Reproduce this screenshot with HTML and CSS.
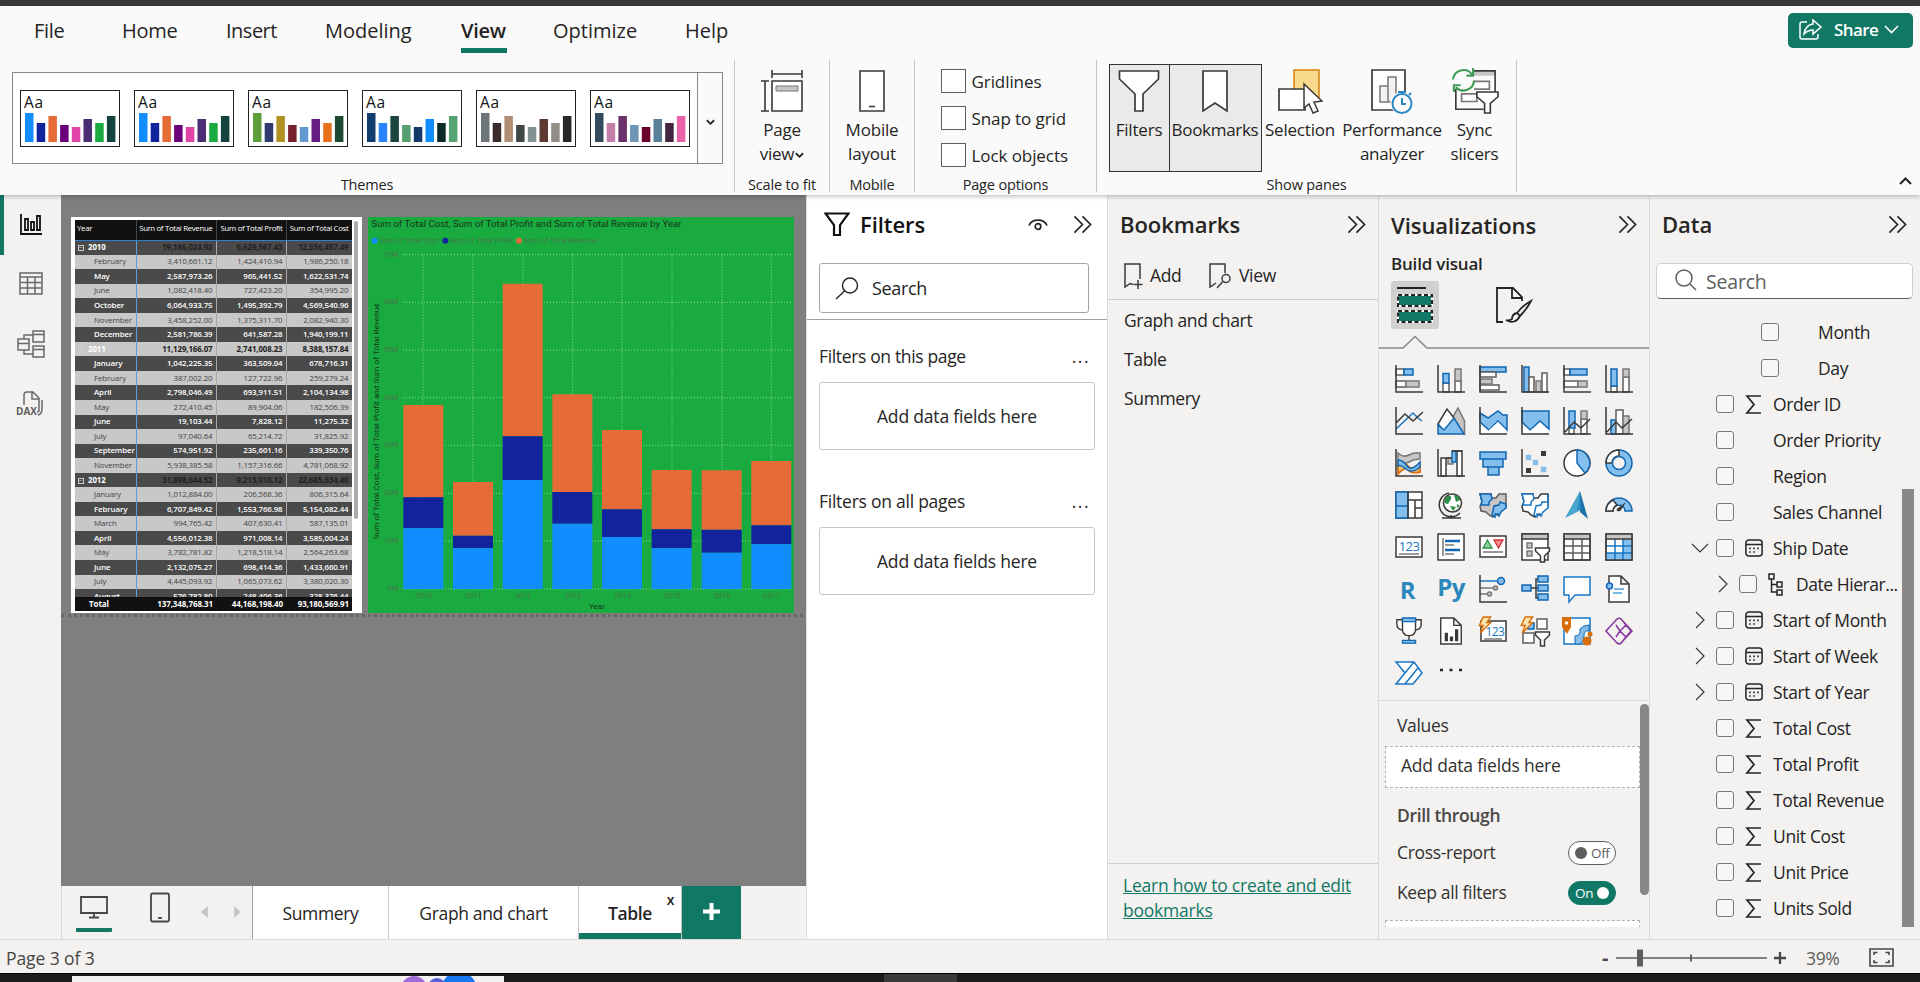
FILE: index.html
```html
<!DOCTYPE html>
<html lang="en">
<head>
<meta charset="utf-8">
<title>Report - View</title>
<link rel="stylesheet" href="styles.css">
</head>
<body>
<svg class="defs" width="0" height="0">
  <symbol id="expand" viewBox="0 0 20 20"><path d="M1.500 1.500 10 10 1.500 18.500M10 1.500 18.500 10 10 18.500" fill="none" stroke="#252423" stroke-width="1.700"/></symbol>
  <symbol id="sigma" viewBox="0 0 17 19"><path d="M16 1H2l7 8.500-7 8.500h14" fill="none" stroke="#252423" stroke-width="1.700"/></symbol>
  <symbol id="calendar" viewBox="0 0 18 18"><rect x=".9" y=".9" width="16.200" height="16.200" rx="3" fill="none" stroke="#252423" stroke-width="1.500"/><path d="M1 5.500h16" stroke="#252423" stroke-width="1.500"/><path d="M8.200 9.300h1.600M12.200 9.300h1.600M4.200 9.300h1.600M4.200 13h1.600M8.200 13h1.600" stroke="#252423" stroke-width="1.700"/></symbol>
  <symbol id="right" viewBox="0 0 10 18"><path d="M1 1l8 8-8 8" fill="none" stroke="#3b3a39" stroke-width="1.200"/></symbol>
  <symbol id="down" viewBox="0 0 18 10"><path d="M1 1l8 8 8-8" fill="none" stroke="#3b3a39" stroke-width="1.200"/></symbol>
  <symbol id="caret" viewBox="0 0 10 7"><path d="M1 1l4 4 4-4" fill="none" stroke="#252423" stroke-width="2"/></symbol>
  <symbol id="bolt" viewBox="0 0 14 19"><path d="M5 1h8l-4 6h4L2 18l3-8H1z" fill="#fbe3b0" stroke="#d86f0a" stroke-width="1.500"/></symbol>
</svg>

<div class="titlebar"></div>
<header class="ribbon">
  <nav class="tabs">
    <span class="tab file">File</span><span class="tab home">Home</span><span class="tab insert">Insert</span><span class="tab modeling">Modeling</span><span class="tab view active">View</span><span class="tab optimize">Optimize</span><span class="tab help">Help</span>
    <button class="share"><svg width="25" height="24" viewBox="0 0 25 24" fill="none" stroke="#fff" stroke-width="1.500"><path d="M9 4H4a2 2 0 0 0-2 2v13a2 2 0 0 0 2 2h14a2 2 0 0 0 2-2v-3"/><path d="M15 2l8 7-8 7v-4c-4 0-6 1-9 4 1-6 4-9.500 9-10z"/></svg><span>Share</span><svg width="15" height="9" viewBox="0 0 15 9"><path d="M1 1l6.500 6.500L14 1" fill="none" stroke="#fff" stroke-width="1.600"/></svg></button>
  </nav>
  <div class="groups">
    <section class="group g-themes">
      <div class="gallery">
        <div class="thumbs">
          <div class="thumb"><b>Aa</b><svg viewBox="0 0 92 30" width="92" height="30"><path fill="#118dff" d="M1 1h8.500v29H1z"/><path fill="#12239e" d="M12.700 11h8.500v19h-8.500z"/><path fill="#e66c37" d="M24.400 4h8.500v26h-8.500z"/><path fill="#6b007b" d="M36.100 13h8.500v17h-8.500z"/><path fill="#e044a7" d="M47.800 15h8.500v15h-8.500z"/><path fill="#4a2d72" d="M59.500 7h8.500v23h-8.500z"/><path fill="#1aab40" d="M71.200 11h8.500v19h-8.500z"/><path fill="#15443f" d="M82.900 4h8.500v26h-8.500z"/></svg></div>
          <div class="thumb"><b>Aa</b><svg viewBox="0 0 92 30" width="92" height="30"><path fill="#118dff" d="M1 1h8.500v29H1z"/><path fill="#12239e" d="M12.700 11h8.500v19h-8.500z"/><path fill="#e66c37" d="M24.400 4h8.500v26h-8.500z"/><path fill="#6b007b" d="M36.100 13h8.500v17h-8.500z"/><path fill="#e044a7" d="M47.800 15h8.500v15h-8.500z"/><path fill="#4a2d72" d="M59.500 7h8.500v23h-8.500z"/><path fill="#1aab40" d="M71.200 11h8.500v19h-8.500z"/><path fill="#15443f" d="M82.900 4h8.500v26h-8.500z"/></svg></div>
          <div class="thumb"><b>Aa</b><svg viewBox="0 0 92 30" width="92" height="30"><path fill="#5d9e3a" d="M1 1h8.500v29H1z"/><path fill="#2f3a6e" d="M12.700 11h8.500v19h-8.500z"/><path fill="#b09222" d="M24.400 4h8.500v26h-8.500z"/><path fill="#761f2c" d="M36.100 13h8.500v17h-8.500z"/><path fill="#6297cf" d="M47.800 15h8.500v15h-8.500z"/><path fill="#641b83" d="M59.500 7h8.500v23h-8.500z"/><path fill="#e86f1c" d="M71.200 11h8.500v19h-8.500z"/><path fill="#1c4931" d="M82.900 4h8.500v26h-8.500z"/></svg></div>
          <div class="thumb"><b>Aa</b><svg viewBox="0 0 92 30" width="92" height="30"><path fill="#103c6e" d="M1 1h8.500v29H1z"/><path fill="#2a83fb" d="M12.700 11h8.500v19h-8.500z"/><path fill="#1c4540" d="M24.400 4h8.500v26h-8.500z"/><path fill="#56a06f" d="M36.100 13h8.500v17h-8.500z"/><path fill="#143a6c" d="M47.800 15h8.500v15h-8.500z"/><path fill="#118dff" d="M59.500 7h8.500v23h-8.500z"/><path fill="#0b2927" d="M71.200 11h8.500v19h-8.500z"/><path fill="#57a373" d="M82.900 4h8.500v26h-8.500z"/></svg></div>
          <div class="thumb"><b>Aa</b><svg viewBox="0 0 92 30" width="92" height="30"><path fill="#6c7677" d="M1 1h8.500v29H1z"/><path fill="#382b2a" d="M12.700 11h8.500v19h-8.500z"/><path fill="#b08d73" d="M24.400 4h8.500v26h-8.500z"/><path fill="#3e4747" d="M36.100 13h8.500v17h-8.500z"/><path fill="#829293" d="M47.800 15h8.500v15h-8.500z"/><path fill="#5f3a33" d="M59.500 7h8.500v23h-8.500z"/><path fill="#928d87" d="M71.200 11h8.500v19h-8.500z"/><path fill="#282727" d="M82.900 4h8.500v26h-8.500z"/></svg></div>
          <div class="thumb"><b>Aa</b><svg viewBox="0 0 92 30" width="92" height="30"><path fill="#324a5c" d="M1 1h8.500v29H1z"/><path fill="#c57da9" d="M12.700 11h8.500v19h-8.500z"/><path fill="#6a3069" d="M24.400 4h8.500v26h-8.500z"/><path fill="#6c95b5" d="M36.100 13h8.500v17h-8.500z"/><path fill="#6a022c" d="M47.800 15h8.500v15h-8.500z"/><path fill="#5a7f99" d="M59.500 7h8.500v23h-8.500z"/><path fill="#442541" d="M71.200 11h8.500v19h-8.500z"/><path fill="#ea62a8" d="M82.900 4h8.500v26h-8.500z"/></svg></div>
        </div>
        <div class="more"><svg width="9" height="7"><use href="#caret"/></svg></div>
      </div>
      <footer>Themes</footer>
    </section>
    <section class="group g-scale">
      <div class="big"><svg width="44" height="44" viewBox="0 0 44 44" fill="none" stroke="#3b3a39" stroke-width="1.600"><path d="M12 1v8M42 1v8M12 5h30M1 12h8M1 42h8M5 12v30"/><path d="M12 12h30v30H12z" fill="#fff"/><path d="M16 17h22v5H16z" fill="#c8c6c4" stroke="#797775" stroke-width="1"/></svg><span>Page</span><span>view<svg class="mini" width="9" height="7"><use href="#caret"/></svg></span></div>
      <footer>Scale to fit</footer>
    </section>
    <section class="group g-mobile">
      <div class="big"><svg width="28" height="44" viewBox="0 0 28 44" fill="none" stroke="#3b3a39" stroke-width="1.600"><path d="M2 2h24v40H2z" fill="#fff"/><path d="M11 37.500h6"/></svg><span>Mobile</span><span>layout</span></div>
      <footer>Mobile</footer>
    </section>
    <section class="group g-options">
      <div class="checks"><label><i></i>Gridlines</label><label><i></i>Snap to grid</label><label><i></i>Lock objects</label></div>
      <footer>Page options</footer>
    </section>
    <section class="group g-panes">
      <div class="buttons">
        <div class="big on b-filters"><svg width="42" height="44" viewBox="0 0 42 44"><path d="M1.500 2h39v8L25 25v17h-8V25L1.500 10z" fill="#fff" stroke="#3b3a39" stroke-width="1.700"/></svg><span>Filters</span></div>
        <div class="big on b-book"><svg width="28" height="44" viewBox="0 0 28 44"><path d="M2 2h24v40L14 34 2 42z" fill="#fff" stroke="#3b3a39" stroke-width="1.700"/></svg><span>Bookmarks</span></div>
        <div class="big b-sel"><svg width="46" height="46" viewBox="0 0 46 46"><path d="M17 2h25v28H17z" fill="#f9d98b" stroke="#d9800f" stroke-width="1.500"/><path d="M2 21h26v21H2z" fill="#fff" stroke="#3b3a39" stroke-width="1.700"/><path d="M27 16v24l5-4 4 9 5-2-4-9 8-1z" fill="#fff" stroke="#3b3a39" stroke-width="1.500"/></svg><span>Selection</span></div>
        <div class="big b-perf"><svg width="44" height="46" viewBox="0 0 44 46" fill="none"><path d="M2 2h33v40H2z" fill="#fff" stroke="#3b3a39" stroke-width="1.700"/><path d="M10 18h8v16h-8zM18 9h8v25h-8z" stroke="#797775" stroke-width="1.500" fill="#f3f2f1"/><circle cx="32" cy="35" r="11.500" fill="#fafafa"/><circle cx="32" cy="35.500" r="9.500" fill="#fff" stroke="#2987c4" stroke-width="2"/><path d="M32 30v6h4M28 24h8M32 24v3M39 27l2-2" stroke="#2987c4" stroke-width="2"/></svg><span>Performance</span><span>analyzer</span></div>
        <div class="big b-sync"><svg width="50" height="48" viewBox="0 0 50 48" fill="none" stroke="#3b3a39" stroke-width="1.700"><path d="M24 2h22v6H24z" fill="#c8c6c4" stroke="none"/><path d="M24 3h22v22M5 22v21h29"/><path d="M24 14h16v8H24M11 27h16v8H11z" fill="#fff" stroke="#797775"/><path d="M2 12a11 11 0 0 1 20-5M24 13a11 11 0 0 1-19 7" stroke="#3f9b57" stroke-width="2.200"/><path d="M23 0v8h-7M3 25v-7h7" stroke="#3f9b57" stroke-width="2.200"/><path d="M27 25h22v5l-8 7v10h-6V37l-8-7z" fill="#fff"/></svg><span>Sync</span><span>slicers</span></div>
      </div>
      <footer>Show panes</footer>
    </section>
    <div class="collapse"><svg width="13" height="8" viewBox="0 0 13 8"><path d="M1 7l5.500-5.500L12 7" fill="none" stroke="#252423" stroke-width="2"/></svg></div>
  </div>
</header>

<main class="work">
  <aside class="rail">
    <div class="railitem sel"><svg width="28" height="28" viewBox="0 0 28 28" fill="none" stroke="#111" stroke-width="1.800"><path d="M4 3v20h21M8 8h3v11H8zM14 11h3v8h-3zM20 5h3v14h-3z"/></svg></div>
    <div class="railitem"><svg width="28" height="28" viewBox="0 0 28 28" fill="none" stroke="#6b6967" stroke-width="1.500"><path d="M3 3h22v21H3zM3 7h22M3 12.500h22M3 18h22M10.500 7v17M18 7v17"/></svg></div>
    <div class="railitem"><svg width="30" height="30" viewBox="0 0 30 30" fill="none" stroke="#6b6967" stroke-width="1.500"><path d="M17 2h11v11H17zM17 17h11v11H17zM2 10h11v11H2zM17 5.500h11M17 20.500h11M2 14.500h11M8 10V6h9M8 21v4h9"/></svg></div>
    <div class="railitem dax"><svg width="30" height="30" viewBox="0 0 30 30" fill="none" stroke="#6b6967" stroke-width="1.500"><path d="M8 17V7q0-3 3-3h6l6 6v12q0 2-2 2M16 4v7h7M26 12v9q0 5-4 6"/></svg><b>DAX</b></div>
  </aside>

  <div class="center">
    <div class="canvas">
      <div class="matrix">
        <div class="mbody">
          <table>
            <colgroup><col class="c1"><col class="c2"><col class="c3"><col class="c4"></colgroup>
            <tr class="head"><td>Year</td><td>Sum of Total Revenue</td><td>Sum of Total Profit</td><td>Sum of Total Cost</td></tr>
            <tr class="d y"><td><i>−</i>2010</td><td>19,186,024.92</td><td>6,629,567.43</td><td>12,556,457.49</td></tr>
            <tr><td>February</td><td>3,410,661.12</td><td>1,424,410.94</td><td>1,986,250.18</td></tr>
            <tr class="d"><td>May</td><td>2,587,973.26</td><td>965,441.52</td><td>1,622,531.74</td></tr>
            <tr><td>June</td><td>1,082,418.40</td><td>727,423.20</td><td>354,995.20</td></tr>
            <tr class="d"><td>October</td><td>6,064,933.75</td><td>1,495,392.79</td><td>4,569,540.96</td></tr>
            <tr><td>November</td><td>3,458,252.00</td><td>1,375,311.70</td><td>2,082,940.30</td></tr>
            <tr class="d"><td>December</td><td>2,581,786.39</td><td>641,587.28</td><td>1,940,199.11</td></tr>
            <tr class="y"><td><i>−</i>2011</td><td>11,129,166.07</td><td>2,741,008.23</td><td>8,388,157.84</td></tr>
            <tr class="d"><td>January</td><td>1,042,225.35</td><td>363,509.04</td><td>678,716.31</td></tr>
            <tr><td>February</td><td>387,002.20</td><td>127,722.96</td><td>259,279.24</td></tr>
            <tr class="d"><td>April</td><td>2,798,046.49</td><td>693,911.51</td><td>2,104,134.98</td></tr>
            <tr><td>May</td><td>272,410.45</td><td>89,904.06</td><td>182,506.39</td></tr>
            <tr class="d"><td>June</td><td>19,103.44</td><td>7,828.12</td><td>11,275.32</td></tr>
            <tr><td>July</td><td>97,040.64</td><td>65,214.72</td><td>31,825.92</td></tr>
            <tr class="d"><td>September</td><td>574,951.92</td><td>235,601.16</td><td>339,350.76</td></tr>
            <tr><td>November</td><td>5,938,385.58</td><td>1,157,316.66</td><td>4,781,068.92</td></tr>
            <tr class="d y"><td><i>−</i>2012</td><td>31,898,644.52</td><td>9,213,010.12</td><td>22,685,634.40</td></tr>
            <tr><td>January</td><td>1,012,884.00</td><td>206,568.36</td><td>806,315.64</td></tr>
            <tr class="d"><td>February</td><td>6,707,849.42</td><td>1,553,766.98</td><td>5,154,082.44</td></tr>
            <tr><td>March</td><td>994,765.42</td><td>407,630.41</td><td>587,135.01</td></tr>
            <tr class="d"><td>April</td><td>4,556,012.38</td><td>971,008.14</td><td>3,585,004.24</td></tr>
            <tr><td>May</td><td>3,782,781.82</td><td>1,218,518.14</td><td>2,564,263.68</td></tr>
            <tr class="d"><td>June</td><td>2,132,075.27</td><td>698,414.36</td><td>1,433,660.91</td></tr>
            <tr><td>July</td><td>4,445,093.92</td><td>1,065,073.62</td><td>3,380,020.30</td></tr>
            <tr class="d"><td>August</td><td>576,782.80</td><td>248,406.36</td><td>328,376.44</td></tr>
          </table>
        </div>
        <div class="mtotal"><span>Total</span><span>137,348,768.31</span><span>44,168,198.40</span><span>93,180,569.91</span></div>
        <div class="mscroll"></div>
      </div>
      <svg class="chart" width="426" height="396" viewBox="25 36 1278 1188">
        <path fill="#1aab40" d="M25 36h1278v1188H25z"/>
        <text x="35" y="66" font-size="28" textLength="931" lengthAdjust="spacingAndGlyphs" fill="#14371c">Sum of Total Cost, Sum of Total Profit and Sum of Total Revenue by Year</text>
        <g font-size="24" fill="#47764a"><text x="58" y="115" textLength="178" lengthAdjust="spacingAndGlyphs">Sum of Total Cost</text><text x="270" y="115" textLength="190" lengthAdjust="spacingAndGlyphs">Sum of Total Profit</text><text x="492" y="115" textLength="222" lengthAdjust="spacingAndGlyphs">Sum of Total Revenue</text></g>
        <circle cx="45" cy="107" r="9" fill="#118dff"/><circle cx="257" cy="107" r="9" fill="#12239e"/><circle cx="478" cy="107" r="9" fill="#e66c37"/>
        <path d="M130 149h1165M130 292h1165M130 435h1165M130 578h1165M130 721h1165M130 865h1165M130 1008h1165M130 1152h1165M190 149v1003M340 149v1003M490 149v1003M639 149v1003M787 149v1003M937 149v1003M1087 149v1003M1235 149v1003" stroke="#8fdca0" stroke-width="3" stroke-dasharray="3 6" fill="none"/>
        <g font-size="22" fill="#47764a" text-anchor="end"><text x="116" y="155">70M</text><text x="116" y="298">60M</text><text x="116" y="441">50M</text><text x="116" y="584">40M</text><text x="116" y="727">30M</text><text x="116" y="871">20M</text><text x="116" y="1014">10M</text><text x="116" y="1158">0M</text></g>
        <g font-size="22" fill="#47764a" text-anchor="middle"><text x="192" y="1178">2010</text><text x="341" y="1178">2011</text><text x="490" y="1178">2012</text><text x="639" y="1178">2013</text><text x="788" y="1178">2014</text><text x="937" y="1178">2015</text><text x="1087" y="1178">2016</text><text x="1235" y="1178">2017</text></g>
        <path fill="#e66c37" d="M131 600h120v277H131zM280 831h120v161H280zM429 236h120v458H429zM578 568h120v293H578zM727 675h120v238H727zM876 795h120v178H876zM1026 796h120v178H1026zM1175 768h120v193H1175z"/>
        <path fill="#12239e" d="M131 877h120v93H131zM280 992h120v38H280zM429 694h120v131H429zM578 861h120v95H578zM727 913h120v83H727zM876 973h120v57H876zM1026 974h120v69H1026zM1175 961h120v57H1175z"/>
        <path fill="#118dff" d="M131 970h120v182H131zM280 1030h120v122H280zM429 825h120v327H429zM578 956h120v196H578zM727 996h120v156H727zM876 1030h120v122H876zM1026 1043h120v109H1026zM1175 1018h120v134H1175z"/>
        <text x="712" y="1211" font-size="24" text-anchor="middle" fill="#14371c">Year</text>
        <text transform="translate(57 1003) rotate(-90)" font-size="23" textLength="708" lengthAdjust="spacingAndGlyphs" fill="#14371c">Sum of Total Cost, Sum of Total Profit and Sum of Total Revenue</text>
      </svg>
      <div class="pageedge"></div>
    </div>
    <div class="pagetabs">
      <div class="layouts">
        <div class="lay on"><svg width="28" height="24" viewBox="0 0 28 24" fill="none" stroke="#484644" stroke-width="1.800"><path d="M1 2h26v16H1zM14 18v4M9 22.500h10"/></svg></div>
        <div class="lay"><svg width="20" height="32" viewBox="0 0 20 32" fill="none" stroke="#484644" stroke-width="1.800"><rect x="1" y="1.500" width="18" height="28" rx="1.500"/><path d="M8 26h4"/></svg></div>
        <svg class="arr" width="7" height="12"><path d="M7 0v12L0 6z" fill="#c8c6c4"/></svg>
        <svg class="arr two" width="7" height="12"><path d="M0 0v12l7-6z" fill="#c8c6c4"/></svg>
      </div>
      <div class="ptab p1">Summery</div><div class="ptab p2">Graph and chart</div><div class="ptab p3">Table<em>x</em></div>
      <div class="plus"><svg width="17" height="17" viewBox="0 0 17 17"><path d="M8.500 0v17M0 8.500h17" stroke="#fff" stroke-width="4"/></svg></div>
    </div>
  </div>

  <section class="pane filters">
    <div class="phead"><svg width="26" height="24" viewBox="0 0 26 24"><path d="M1.500 1.500h23L16 13v10h-6V13z" fill="none" stroke="#111" stroke-width="2.200"/></svg><h2>Filters</h2><svg class="eye" width="20" height="13" viewBox="0 0 20 13" fill="none" stroke="#252423" stroke-width="1.700"><path d="M1 7.500a9.500 8 0 0 1 18 0"/><circle cx="10" cy="8.500" r="2.800"/></svg><svg width="19" height="19"><use href="#expand"/></svg></div>
    <div class="fsearch"><svg width="24" height="23" viewBox="0 0 24 23" fill="none" stroke="#252423" stroke-width="1.400"><circle cx="15" cy="8.500" r="7.500"/><path d="M9.500 14 1 22"/></svg>Search</div>
    <div class="fsec first"><span>Filters on this page</span><b>...</b></div>
    <div class="drop">Add data fields here</div>
    <div class="fsec"><span>Filters on all pages</span><b>...</b></div>
    <div class="drop">Add data fields here</div>
  </section>

  <section class="pane bookmarks">
    <div class="phead"><h2>Bookmarks</h2><svg width="19" height="19"><use href="#expand"/></svg></div>
    <div class="bbar"><svg width="19" height="26" viewBox="0 0 19 26" fill="none" stroke="#3b3a39" stroke-width="1.500"><path d="M16 16V1H1v23l5-3.500 3 1M9.500 21.500h9M14 17v9"/></svg><span class="badd">Add</span><svg width="23" height="26" viewBox="0 0 23 26" fill="none" stroke="#3b3a39" stroke-width="1.500"><path d="M16 10V1H1v23l6-4"/><circle cx="17" cy="15.500" r="4"/><path d="M14 18.500 8 25"/></svg><span>View</span></div>
    <ul><li>Graph and chart</li><li>Table</li><li>Summery</li></ul>
    <div class="learn"><a>Learn how to create and edit<br>bookmarks</a></div>
  </section>

  <section class="pane viz">
    <div class="phead"><h2>Visualizations</h2><svg width="19" height="19"><use href="#expand"/></svg></div>
    <h3>Build visual</h3>
    <div class="modes">
      <div class="mode on"><svg width="36" height="36" viewBox="0 0 36 36"><path d="M0 1h29" stroke="#252423" stroke-width="2"/><path d="M1 8h34v11H1zM1 24h34v11H1z" fill="#117865" stroke="#fff" stroke-width="2"/><path d="M1 8h34v11H1zM1 24h34v11H1z" fill="none" stroke="#222" stroke-width="2" stroke-dasharray="4 2.500"/></svg></div>
      <div class="mode"><svg width="38" height="38" viewBox="0 0 38 38" fill="none" stroke="#252423" stroke-width="1.800"><path d="M8 36H2V2h16l9 9v4M17 2v10h10"/><path d="M36 15q-9 5-14 12l3 3q7-7 11-15zM22 27q-5 1-5 6-3 2-6 1 9 5 14-4"/></svg></div>
    </div>
    <svg class="notch" width="270" height="14" viewBox="0 0 270 14"><path d="M0 13h24L36 1.500 48 13h222" fill="none" stroke="#8a8886" stroke-width="1.500"/></svg>
    <div class="icons">
      <svg viewBox="0 0 28 28"><path class="w" d="M1 4h8v6H1zM1 16h10v6H1z"/><path class="b" d="M9 4h9v6H9z"/><path class="g" d="M11 16h13v6H11z"/><path class="k" d="M1 0v27h27"/></svg>
      <svg viewBox="0 0 28 28"><path class="w" d="M6 18h6v9H6zM18 16h6v11h-6z"/><path class="b" d="M6 8.500h6V18H6z"/><path class="g" d="M18 4h6v12h-6z"/><path class="k" d="M1 0v27h27"/></svg>
      <svg viewBox="0 0 28 28"><path class="b" d="M1 2h26v5H1z"/><path class="w" d="M1 7h16v5H1zM1 20h19v5H1z"/><path class="g" d="M1 14h12v5H1z"/><path class="k" d="M1 0v27h27"/></svg>
      <svg viewBox="0 0 28 28"><path class="b" d="M3 2h5v25H3z"/><path class="w" d="M8 12h5v15H8zM21 8h5v19h-5z"/><path class="g" d="M15 16h5v11h-5z"/><path class="k" d="M1 0v27h27"/></svg>
      <svg viewBox="0 0 28 28"><path class="w" d="M1 4h6v6H1zM1 16h14v6H1z"/><path class="b" d="M7 4h17v6H7z"/><path class="g" d="M15 16h9v6h-9z"/><path class="k" d="M1 0v27h27"/></svg>
      <svg viewBox="0 0 28 28"><path class="w" d="M6 21h6v6H6zM18 12h6v15h-6z"/><path class="b" d="M6 4h6v17H6z"/><path class="g" d="M18 4h6v8h-6z"/><path class="k" d="M1 0v27h27"/></svg>

      <svg viewBox="0 0 28 28"><path class="bl" d="M1 22 18 6l5 5 4 3"/><path class="k" d="m1 16 9-9 8 7 10-9M1 0v27h27"/></svg>
      <svg viewBox="0 0 28 28"><path class="g" d="m14 13 7-12 6.500 13v13z"/><path class="wk" d="M1 17 10 2l7 9-8 15z"/><path class="b" d="M1 27V18l6 5 10-12 10 16z"/></svg>
      <svg viewBox="0 0 28 28"><path class="b" d="m1 6 8 5 10-7 5 4h4v15l-9-9-9 9-9-8z"/><path class="w0" d="m2 19 7 5 10-9 8 8v3H2z"/><path class="k" d="M1 0v27h27"/></svg>
      <svg viewBox="0 0 28 28"><path class="b" d="M1 4h27v18l-9-8-10 9-8-8z"/><path class="w0" d="m2 18 7 6 10-8 8 7v3H2z"/><path class="k" d="M1 0v27h27"/></svg>
      <svg viewBox="0 0 28 28"><path class="w" d="M6 20h5v7H6zM18 12h6v15h-6z"/><path class="b" d="M6 4h6v17H6z"/><path class="g" d="M18 4h6v8h-6z"/><path class="k" d="m2 25 9-10 7 6 9-9M1 0v27h27"/></svg>
      <svg viewBox="0 0 28 28"><path class="b" d="M6 13h5v14H6z"/><path class="w" d="M11 3h7v24h-7z"/><path class="g" d="M18 9h6v18h-6z"/><path class="k" d="m2 25 9-10 6 6 10-9M1 0v27h27"/></svg>

      <svg viewBox="0 0 28 28"><path class="g" d="M3 4q5 5 11 2t11-2v6q-6 0-11 3T3 12z"/><path d="M3 15q6-3 10 2t12-2v8q-9 2-12-2T3 25z" fill="#f9c77a" stroke="#d86f0a" stroke-width="1.800"/><path class="b" d="M3 11q5 0 9 6t13-4v5q-8 7-14 2T3 17z"/><path class="k" d="M1 0v27h27"/></svg>
      <svg viewBox="0 0 28 28"><path class="wk" d="M4 9h5v18H4zM20 2h5v25h-5z"/><path class="g" d="M11 9h5v6h-5z"/><path class="b" d="M15 2h4v11h-4z"/><path class="k" d="M1 0v27h27M9 9h6M15 2h10"/></svg>
      <svg viewBox="0 0 28 28"><path class="b" d="M1 3h26v7H1zM4 10h20v8H4zM9 18h11v8H9z"/></svg>
      <svg viewBox="0 0 28 28"><path d="M20 2h5v5h-5zM5 19h5v5H5z" fill="#3b3a39"/><path d="M5 6h5v5H5zM12 11h5v5h-5zM20 18h5v5h-5z" fill="#83beec" stroke="#9cc3e0" stroke-width=".6"/><path class="k" d="M1 0v27h27"/></svg>
      <svg viewBox="0 0 28 28"><circle class="wk" cx="14" cy="14" r="13"/><path class="b" d="M14 1a13 13 0 0 1 8 23l-8-10z"/></svg>
      <svg viewBox="0 0 28 28"><circle class="b" cx="14" cy="14" r="13"/><path class="wk" d="M14 1A13 13 0 0 0 1 14h6a7 7 0 0 1 7-7z"/><circle cx="14" cy="14" r="6.500" fill="#f3f2f1" stroke="#1267b2" stroke-width="1.500"/></svg>

      <svg viewBox="0 0 28 28"><path class="wk" d="M1 1h26v26H1z"/><path class="b" d="M1 1h12v26H1zM1 15h12"/><path class="k" d="M13 1v26M13 9h14M20 9v18M20 17h7"/></svg>
      <svg viewBox="0 0 28 28"><path class="k" d="M12 2a12 12 0 1 0 11 20M5 27h19M14 24v3"/><circle class="wk" cx="15.500" cy="12" r="9"/><path d="M8 7q7-5 6 1l-3 5q-5 0-3-6zM17 4q6 0 6 5l-4 2zM13 15l6 1-3 4zM20 13l3 2-3 2z" fill="#2e8f48"/></svg>
      <svg viewBox="0 0 28 28"><path class="gk" d="M1 3h11v4h5l3-4h7v13l-5 4-3 4h-3l-2 2-4-2-3-3-5-1-1-5H1l2-4z"/><path class="b" d="M1 3h11l1 5-3 3v3H2l1-4zM27 13v4l-5 4-2 4-1-2h-3v3l-3-2 2-9 5-1 1-3z"/></svg>
      <svg viewBox="0 0 28 28"><path class="wk" d="M1 3h11v4h5l3-4h7v13l-5 4-3 4h-3l-2 2-4-2-3-3-5-1-1-5H1l2-4z"/><path class="wb" d="M1 3h11l1 5-3 3v3H2l1-4zM27 3v14l-5 4-2 4-1-2h-3v3l-3-2 2-9 5-1 1-3h6"/></svg>
      <svg viewBox="0 0 28 28"><path d="M17 0 2 27l16-8z" fill="#4aa6d0"/><path d="M17 0l8 28-8-7z" fill="#1a73a8"/><path d="M17 0 14 20l4-2z" fill="#2d8fc0"/></svg>
      <svg viewBox="0 0 28 28"><path class="b" d="M1 20a13 13 0 0 1 26 0h-7a6 6 0 0 0-12 0z"/><path class="wk" d="M1 20A13 13 0 0 1 8 9l4 5q-4 2-4 6z"/><path d="M12 20q3 1 4-1l5-8-8 6q-2 1-1 3z" fill="#3b3a39"/></svg>

      <svg viewBox="0 0 28 28"><path class="wk" d="M1 4h26v20H1z"/><text x="14" y="18" text-anchor="middle" class="n">123</text><path class="gl" d="M4 21h20"/></svg>
      <svg viewBox="0 0 28 28"><path class="wk" d="M1 1h26v26H1z"/><path class="gl" d="M6 5v18M8 12h9M8 21h9"/><path d="M8 8h15M8 17h15" stroke="#1267b2" stroke-width="2.500"/></svg>
      <svg viewBox="0 0 28 28"><path class="wk" d="M1 3h26v21H1z"/><path d="m4 15 4.500-8L13 15z" fill="#8fd19e" stroke="#2e8f48" stroke-width="1.300"/><path d="M15 7h9l-4.500 8z" fill="#f28b8b" stroke="#d13438" stroke-width="1.300"/><path class="gl" d="M4 19h20"/></svg>
      <svg viewBox="0 0 28 28"><path class="wk" d="M1 1h26v26H1z"/><path d="M1 1h26v5H1z" fill="#c8c6c4" stroke="#3b3a39" stroke-width="1.400"/><path class="g" d="M6 10h5v5H6zM6 18h5v5H6z"/><path class="wk" d="M14.500 15h14v3l-5 5v6h-4v-6l-5-5z"/></svg>
      <svg viewBox="0 0 28 28"><path class="w" d="M1 1h26v26H1zM10 5v22M19 5v22M1 13h26M1 20h26"/><path d="M1 1h26v5H1z" fill="#c8c6c4"/><path class="k" d="M1 1h26v26H1zM1 6h26"/></svg>
      <svg viewBox="0 0 28 28"><path class="w" d="M1 1h26v26H1z"/><path d="M18 6h9v21H1v-7h17z" fill="#83beec"/><path d="M1 1h26v5H1z" fill="#c8c6c4"/><path class="bl" d="M10 6v21M18 6v21M1 13h26M1 20h26"/><path class="k" d="M1 1h26v26H1zM1 6h26"/></svg>

      <svg viewBox="0 0 28 28"><text x="12.500" y="24" text-anchor="middle" class="lang">R</text></svg>
      <svg viewBox="0 0 28 28"><text x="14" y="21" text-anchor="middle" class="lang py">Py</text></svg>
      <svg viewBox="0 0 28 28"><path class="bl" d="M1 6h18"/><circle class="b" cx="22" cy="6" r="3.500"/><path class="gl" d="M1 13h14M1 19h7"/><circle class="g" cx="16.500" cy="13" r="2"/><circle class="g" cx="10.500" cy="19" r="2"/><path class="k" d="M1 0v27h27"/></svg>
      <svg viewBox="0 0 28 28"><path class="k" d="M10 13h7M18 4h-3v19h3"/><path class="b" d="M1 10h9v6H1zM17 1h10v6H17zM17 10h10v6H17zM17 19h10v6H17z"/></svg>
      <svg viewBox="0 0 28 28"><path class="wb" d="M1 2h26v18H12l-6 7v-7H1z"/></svg>
      <svg viewBox="0 0 28 28"><path class="wk" d="M4 1h12l8 8v18H4zM16 1v8h8"/><path d="M9 14h10M8 18h9" stroke="#4ea0dc" stroke-width="1.500"/><circle class="b" cx="4.500" cy="11" r="3"/></svg>

      <svg viewBox="0 0 28 30"><path class="wk" d="M7 3H1v5q0 5 6 6M21 3h6v5q0 5-6 6"/><path class="wk" d="M7 2h14v12q-1 6-7 6t-7-6zM14 20v5"/><path class="b" d="M7 1h14v4H7zM7 25h14v3H7z"/></svg>
      <svg viewBox="0 0 28 30"><path class="wk" d="M3 1h14l8 8v20H3zM17 1v8h8"/><path d="M9 17v9M14.500 21v5M20 13v13" stroke="#3b3a39" stroke-width="3.500"/></svg>
      <svg viewBox="0 0 28 28"><path class="wk" d="M2 4h25v20H2z"/><text x="16" y="19" text-anchor="middle" class="n sm">123</text><path class="gl" d="M5 22h18"/><use href="#bolt" x="-1" y="-1" width="14" height="18"/></svg>
      <svg viewBox="0 0 28 28"><path class="w" d="M16 2h10v10H16zM2 16h11v10H2z"/><path class="b" d="M7 6h6v6H7z"/><path class="wk" d="M14.500 15h14v3l-5 5v6h-4v-6l-5-5z"/><use href="#bolt" x="-1" y="-1" width="14" height="18"/></svg>
      <svg viewBox="0 0 28 28"><path class="wb" d="M1 1h26v26H1z"/><path d="M12 27v-8q6 0 5-7 3-4 9-4v6q-5-1-5 5t-4 8z" fill="#83beec" stroke="#1267b2"/><path d="M-1 0h9v10l-4 7-5-7z" fill="#d86f0a"/><circle cx="3.500" cy="6" r="1.700" fill="#fff"/><circle cx="24" cy="24" r="4.500" fill="#d86f0a"/><circle cx="27" cy="17" r="2.500" fill="#d86f0a"/></svg>
      <svg viewBox="0 0 28 28"><path d="M12 2 1 14l11 12q3 2 5-1l4-5-6-6 6-6-4-5q-2-3-5-1zM16 2l11 12-11 12M15 14l6-6 5 6-5 6zM11 8l4 6-4 6" fill="none" stroke="#8b3a9e" stroke-width="1.600"/></svg>

      <svg viewBox="0 0 28 28"><path class="wb" d="M1 3h18l8 11-9 11H1l9-11zM19 3 1 25M23 9 10 25M10 14 1 3"/></svg>
      <svg viewBox="0 0 28 28"><path d="M3 11h3M12.500 11h3M22 11h3" stroke="#252423" stroke-width="2.500"/></svg>
    </div>
    <div class="wells">
      <div class="wellbody">
        <div class="wl">Values</div>
        <div class="well">Add data fields here</div>
        <div class="wl drill">Drill through</div>
        <div class="tog"><span>Cross-report</span><div class="switch"><i></i>Off</div></div>
        <div class="tog t2"><span>Keep all filters</span><div class="switch on">On<i></i></div></div>
        <div class="well cut"></div>
      </div>
      <div class="wscroll"></div>
    </div>
  </section>

  <section class="pane data">
    <div class="phead"><h2>Data</h2><svg width="19" height="19"><use href="#expand"/></svg></div>
    <div class="dsearch"><svg width="22" height="22" viewBox="0 0 22 22" fill="none" stroke="#605e5c" stroke-width="1.500"><circle cx="9" cy="9" r="8"/><path d="m15 15 6 6"/></svg>Search</div>
    <div class="dlist">
      <div class="rows">
        <div class="row deep"><s></s><i></i><s></s><span>Month</span></div>
        <div class="row deep"><s></s><i></i><s></s><span>Day</span></div>
        <div class="row"><s></s><i></i><s><svg width="17" height="19"><use href="#sigma"/></svg></s><span>Order ID</span></div>
        <div class="row"><s></s><i></i><s></s><span>Order Priority</span></div>
        <div class="row"><s></s><i></i><s></s><span>Region</span></div>
        <div class="row"><s></s><i></i><s></s><span>Sales Channel</span></div>
        <div class="row"><s><svg width="18" height="10"><use href="#down"/></svg></s><i></i><s><svg width="18" height="18"><use href="#calendar"/></svg></s><span>Ship Date</span></div>
        <div class="row child"><s><svg width="10" height="18"><use href="#right"/></svg></s><i></i><s><svg width="15" height="23" viewBox="0 0 15 23" fill="none" stroke="#252423" stroke-width="1.500"><path d="M1 1h5v5H1zM9 9h5v5H9zM9 17h5v5H9zM3.500 6v13H9M3.500 11.500H9"/></svg></s><span>Date Hierar...</span></div>
        <div class="row"><s><svg width="10" height="18"><use href="#right"/></svg></s><i></i><s><svg width="18" height="18"><use href="#calendar"/></svg></s><span>Start of Month</span></div>
        <div class="row"><s><svg width="10" height="18"><use href="#right"/></svg></s><i></i><s><svg width="18" height="18"><use href="#calendar"/></svg></s><span>Start of Week</span></div>
        <div class="row"><s><svg width="10" height="18"><use href="#right"/></svg></s><i></i><s><svg width="18" height="18"><use href="#calendar"/></svg></s><span>Start of Year</span></div>
        <div class="row"><s></s><i></i><s><svg width="17" height="19"><use href="#sigma"/></svg></s><span>Total Cost</span></div>
        <div class="row"><s></s><i></i><s><svg width="17" height="19"><use href="#sigma"/></svg></s><span>Total Profit</span></div>
        <div class="row"><s></s><i></i><s><svg width="17" height="19"><use href="#sigma"/></svg></s><span>Total Revenue</span></div>
        <div class="row"><s></s><i></i><s><svg width="17" height="19"><use href="#sigma"/></svg></s><span>Unit Cost</span></div>
        <div class="row"><s></s><i></i><s><svg width="17" height="19"><use href="#sigma"/></svg></s><span>Unit Price</span></div>
        <div class="row"><s></s><i></i><s><svg width="17" height="19"><use href="#sigma"/></svg></s><span>Units Sold</span></div>
      </div>
      <div class="dscroll"></div>
    </div>
  </section>
</main>

<footer class="status">
  <span class="pageno">Page 3 of 3</span>
  <div class="zoom"><b class="minus">-</b><svg class="slider" width="151" height="20" viewBox="0 0 151 20"><path d="M0 10h151" stroke="#605e5c" stroke-width="1.300"/><path d="M24 1.500v17" stroke="#605e5c" stroke-width="6"/><path d="M75 6.500v7" stroke="#605e5c" stroke-width="2"/></svg><svg class="zplus" width="12" height="12"><path d="M6 0v12M0 6h12" stroke="#484644" stroke-width="2.300"/></svg><span class="pct">39%</span><svg width="25" height="19" viewBox="0 0 25 19" fill="none" stroke="#484644" stroke-width="1.600"><path d="M1 1h23v17H1z"/><path d="M5 7V4.500h3.500M16.500 4.500H20V7M20 12v2.500h-3.500M8.500 14.500H5V12"/></svg></div>
</footer>
<div class="taskbar"><div class="tsearch"><svg width="80" height="6" viewBox="0 0 80 6"><circle cx="13" cy="13" r="13" fill="#a06cd5"/><circle cx="36" cy="11" r="9" fill="#5b5bd6"/><circle cx="58" cy="14" r="18" fill="#1677f0"/></svg></div><div class="tactive"></div></div>
</body>
</html>
```
FILE: styles.css
```css
* { box-sizing: border-box; }
body { margin: 0; width: 1920px; height: 982px; overflow: hidden; background: #f3f2f1; color: #252423; font-family: "Open Sans", "Noto Sans", sans-serif; font-size: 17.5px; letter-spacing: -0.35px; display: flex; flex-direction: column; white-space: nowrap; }
svg { display: block; flex: none; }
.defs { position: absolute; }
h2, h3, ul { margin: 0; padding: 0; }
.titlebar { height: 6px; background: #3b3a39; flex: none; }

/* Ribbon */
.ribbon { height: 189px; flex: none; background: #fafafa; display: flex; flex-direction: column; box-shadow: 0 1px 5px rgba(0,0,0,.3); z-index: 2; }
.tabs { height: 54px; display: flex; align-items: flex-start; padding: 0 7px 0 34px; font-size: 20px; letter-spacing: -.3px; }
.tab { line-height: 50px; height: 48px; margin-right: 48px; flex: none; }
.file { width: 30px; margin-right: 58px; }
.home { width: 56px; }
.insert { width: 51px; letter-spacing: -.5px; }
.modeling { width: 88px; letter-spacing: 0; }
.view { width: 46px; margin-right: 46px; }
.optimize { width: 84px; letter-spacing: 0; }
.help { width: 43px; letter-spacing: 0; }
.tab.active { font-weight: 600; height: 47px; border-bottom: 5px solid #117865; }
.share { margin: 7px 0 0 auto; width: 125px; height: 35px; border: 0; border-radius: 5px; background: #117865; color: #fff; font: 600 17px "Open Sans", sans-serif; letter-spacing: -.6px; display: flex; align-items: center; padding: 0 10px 2px; gap: 11px; }
.share span { width: 44px; }
.share svg:last-child { margin-left: -5px; }
.groups { flex: 1; display: flex; }
.group { height: 132px; display: flex; flex-direction: column; border-right: 1px solid #c8c6c4; align-items: center; flex: none; }
.group footer { margin-top: auto; font-size: 14.5px; line-height: 16px; letter-spacing: -.15px; height: 15px; }
.g-themes { width: 735px; }
.g-scale { width: 95px; }
.g-mobile { width: 85px; }
.g-options { width: 182px; }
.g-panes { width: 420px; }
.gallery { width: 711px; height: 92px; margin: 12px 0 0 1px; border: 1px solid #8a8886; background: #fff; display: flex; }
.thumbs { flex: 1; display: flex; gap: 14px; padding: 17px 0 0 7px; }
.thumb { width: 100px; height: 57px; border: 1.5px solid #222; padding: 2px 0 0 3px; }
.thumb b { display: block; font-size: 15.5px; font-weight: 400; line-height: 18px; height: 19px; letter-spacing: .8px; color: #111; }
.more { width: 25px; border-left: 1px solid #8a8886; display: flex; align-items: center; justify-content: center; padding-top: 8px; background: #fafafa; }
.big { display: flex; flex-direction: column; align-items: center; padding-top: 8px; font-size: 17px; line-height: 24px; letter-spacing: -.2px; }
.big svg { margin-bottom: 4px; height: 46px; }
.big span { display: flex; align-items: center; }
.big svg.mini { height: 7px; margin: 3px 0 0 1px; }
.checks { width: 182px; padding: 9px 0 0 26px; display: flex; flex-direction: column; gap: 13px; font-size: 17px; letter-spacing: -.08px; }
.checks label { display: flex; align-items: center; gap: 6px; height: 24px; }
.checks i { width: 25px; height: 24px; background: #fff; border: 1px solid #605e5c; }
.buttons { display: flex; width: 420px; padding: 4px 0 0 12px; height: 112px; }
.buttons .big { padding-top: 4px; }
.buttons .on { background: #eaeaea; border: 1px solid #333; height: 108px; padding-top: 3px; }
.b-filters { width: 61px; }
.b-book { width: 93px; margin-left: -1px; }
.b-sel { width: 77px; }
.b-perf { width: 107px; }
.big.b-perf, .big.b-book { letter-spacing: -.3px; }
.b-sync { width: 58px; }
.collapse { margin-left: auto; padding: 117px 8px 0 0; }

/* Work area */
.work { flex: none; height: 745px; display: flex; border-bottom: 1px solid #dcdad8; }
.rail { width: 61px; flex: none; }
.railitem { height: 60px; display: flex; align-items: center; justify-content: center; padding-bottom: 2px; }
.railitem.sel { border-left: 4px solid #117865; padding: 0 4px 0 0; }
.dax { flex-direction: column; padding: 0 0 6px; }
.dax b { font-size: 10px; line-height: 10px; margin-top: -12px; color: #605e5c; background: #f3f2f1; margin-left: -8px; letter-spacing: 0; }
.center { width: 745px; flex: none; display: flex; flex-direction: column; }
.canvas { height: 691px; background: #7f7f7f; display: flex; flex-wrap: wrap; align-content: flex-start; padding: 22px 0 0 10px; }
.matrix { width: 291px; height: 396px; background: #fff; position: relative; padding: 3px 0 0 4px; flex: none; }
.mbody { height: 376.5px; width: 277px; overflow: hidden; }
.matrix table { border-collapse: collapse; table-layout: fixed; width: 277px; font-size: 7.9px; letter-spacing: -.12px; line-height: 11px; }
.matrix td { padding: 0 3px 0 0; height: 14.56px; text-align: right; border-right: 1px solid #a9a9a9; background: #c8c8c8; color: #444; }
.matrix td:first-child { text-align: left; padding: 0 0 0 19px; border-right: 1px solid #5a9ee0; }
.matrix .d td { background: #4a4a4a; color: #fff; font-weight: 600; }
.matrix .y td { font-weight: 700; color: #222; }
.matrix .y td:first-child { padding-left: 2.5px; color: #fff; }
.matrix i { display: inline-block; width: 6px; height: 6px; line-height: 4px; font-size: 6px; border: 1px solid #ccc; margin-right: 4.5px; font-style: normal; text-align: center; font-weight: 400; }
.matrix .head td { height: 20px; background: #111; color: #fff; font-size: 7.8px; letter-spacing: -.3px; font-weight: 400; border-bottom: 1px solid #2f7fd0; border-right: 1px solid #444; padding-bottom: 3px; }
.matrix .head td:first-child { padding-left: 2px; border-right-color: #444; }
.c1 { width: 61px; } .c2 { width: 80px; } .c3 { width: 70px; } .c4 { width: 66px; }
.mtotal { width: 277px; height: 14px; background: #111; color: #fff; display: grid; grid-template-columns: 61px 80px 70px 66px; font-size: 8px; font-weight: 700; line-height: 14px; text-align: right; letter-spacing: -.1px; }
.mtotal span { padding-right: 3px; }
.mtotal span:first-child { text-align: left; padding-left: 14px; }
.mscroll { position: absolute; left: 283px; top: 4px; width: 4px; height: 298px; border-radius: 2px; background: #aaa; }
.chart { margin-left: 6px; font-family: Roboto, sans-serif; letter-spacing: 0; }
.pageedge { width: 742px; margin: 1px 0 0 -10px; border-top: 3px dotted #686868; height: 3px; }

/* Page tabs */
.pagetabs { height: 53px; display: flex; }
.layouts { width: 192px; display: flex; border-right: 1px solid #a19f9d; border-left: 1px solid #dcdad8; padding-left: 14px; }
.lay { width: 36px; height: 46px; display: flex; justify-content: center; padding-top: 9px; flex: none; }
.lay.on { border-bottom: 4px solid #117865; margin-right: 30px; border-radius: 1px; }
.lay:nth-child(2) { padding-top: 6px; }
.arr { margin: 20px 0 0 23px; }
.arr.two { margin-left: 26px; }
.ptab { background: #fff; border-right: 1px solid #c8c6c4; text-align: center; line-height: 53px; position: relative; padding-top: 1px; }
.p1 { width: 136px; } .p2 { width: 190px; }
.p3 { width: 103px; font-weight: 600; box-shadow: inset 0 -6px #117865; }
.p3 em { position: absolute; right: 7px; top: 6px; font-size: 14px; line-height: 16px; font-style: normal; }
.plus { width: 59px; background: #117865; display: flex; align-items: center; justify-content: center; padding-bottom: 3px; }

/* Panes */
.pane { flex: none; display: flex; flex-direction: column; }
.phead { height: 58px; display: flex; align-items: center; }
h2 { font-size: 22px; font-weight: 600; letter-spacing: -.05px; line-height: 30px; }
.phead > svg:last-child { margin-left: auto; }
.filters { width: 301px; background: #fff; border-left: 1px solid #ddd; }
.filters .phead { padding: 0 15px 0 17px; }
.filters h2 { color: #111; margin-left: 10px; }
.eye { margin-left: auto; }
.filters .phead > svg:last-child { margin-left: 25px; }
.fsearch { width: 270px; height: 50px; margin: 10px 0 6px 12px; border: 1px solid #a8a6a4; border-radius: 3px; display: flex; align-items: center; gap: 13px; padding-left: 15px; font-size: 18px; }
.fsec { display: flex; justify-content: space-between; padding: 0 17px 0 12px; margin-top: 37px; height: 40px; line-height: 28px; letter-spacing: -.25px; }
.fsec b { font-weight: 400; letter-spacing: 1.5px; }
.fsec.first { margin-top: 0; border-top: 1px solid #a19f9d; height: 63px; padding-top: 22px; letter-spacing: -.35px; }
.drop { margin: 0 12px; height: 68px; border: 1px solid #c8c6c4; border-radius: 3px; text-align: center; line-height: 67px; letter-spacing: -.18px; }
.bookmarks { width: 271px; border-left: 1px solid #dcdad8; }
.bookmarks .phead { padding: 0 12px; }
.bbar { height: 47px; display: flex; padding: 10px 0 0 16px; border-bottom: 1px solid #d2d0ce; line-height: 25px; gap: 7px; }
.badd { width: 52px; }
.bookmarks ul { list-style: none; padding: 1px 0 0 16px; line-height: 39px; }
.learn { margin-top: auto; height: 76px; border-top: 1px solid #d2d0ce; padding: 9px 0 0 15px; line-height: 24.5px; color: #117865; text-decoration: underline; letter-spacing: -.23px; }
.viz { width: 271px; border-left: 1px solid #dcdad8; }
.viz .phead { padding: 2px 12px 0; height: 57px; }
h3 { font-size: 17px; font-weight: 600; letter-spacing: -.2px; line-height: 24px; padding-left: 12px; height: 29px; }
.modes { display: flex; padding-left: 12px; gap: 51px; height: 54px; }
.mode { width: 48px; height: 48px; display: flex; align-items: center; justify-content: center; border-radius: 3px; }
.mode.on { background: #d2d0ce; }
.icons { display: grid; grid-template-columns: repeat(6, 28px); grid-auto-rows: 28px; gap: 14px; padding: 16px 0 0 16px; height: 351px; }
.icons svg { width: 28px; height: 28px; overflow: visible; }
.k, .w, .b, .g, .wk, .wb, .bl, .gl, .gk { stroke-width: 1.5; fill: none; stroke: #3b3a39; }
.w { fill: #fff; stroke: #605e5c; }
.wk { fill: #fff; }
.w0 { fill: #fff; }
.b { fill: #83beec; stroke: #1267b2; }
.g { fill: #c8c6c4; stroke: #797775; }
.gk { fill: #c8c6c4; stroke: #605e5c; }
.wb { fill: #fff; stroke: #1976c4; }
.bl { stroke: #1976c4; }
.gl { stroke: #797775; }
.n { font-size: 13px; fill: #1976c4; letter-spacing: -.6px; }
.n.sm { font-size: 12px; }
.lang { font-size: 24px; font-weight: 700; fill: #2c87bb; letter-spacing: -.5px; }
.wells { border-top: 1px solid #dcdad8; flex: none; height: 227px; display: flex; overflow: hidden; }
.wellbody { width: 261px; padding-left: 6px; overflow: hidden; color: #323130; }
.wl { padding: 11px 0 0 12px; height: 45px; line-height: 26px; }
.well { height: 42px; border: 1px dashed #b3b0ad; background: #fff; line-height: 37px; padding-left: 15px; letter-spacing: -.2px; }
.drill { font-weight: 600; height: 53px; padding-top: 14px; color: #484644; }
.tog { display: flex; justify-content: space-between; padding: 0 24px 0 12px; height: 24px; line-height: 23px; }
.t2 { margin: 16px 0 15px; }
.switch { width: 48px; height: 24px; border: 1px solid #605e5c; border-radius: 12px; background: #fff; font-size: 13.5px; color: #605e5c; display: flex; align-items: center; gap: 4px; padding: 0 5px 0 6px; }
.switch i { width: 12px; height: 12px; border-radius: 50%; background: #605e5c; flex: none; }
.switch.on { background: #117865; border-color: #117865; color: #fff; }
.switch.on i { background: #fff; }
.well.cut { height: 20px; }
.wscroll { width: 9px; height: 191px; margin-top: 3px; background: #8a8886; border-radius: 5px; }
.data { width: 271px; border-left: 1px solid #dcdad8; }
.data .phead { padding: 0 13px 0 12px; }
.dsearch { width: 257px; height: 36px; margin: 10px 0 0 6px; background: #fff; border: 1px solid #d2d0ce; border-bottom-color: #605e5c; border-radius: 5px; display: flex; align-items: center; gap: 9px; padding-left: 18px; font-size: 19.5px; color: #605e5c; letter-spacing: -.2px; }
.dsearch svg { margin-bottom: 2px; }
.dlist { display: flex; height: 628px; padding-top: 15px; overflow: hidden; }
.rows { width: 252px; flex: none; }
.row { height: 36px; display: grid; grid-template-columns: 24px 18px 27px auto; justify-content: start; column-gap: 6px; align-items: center; padding-left: 36px; }
.row s { display: flex; justify-content: center; text-decoration: none; }
.row s:first-child { padding-left: 4px; }
.row i { width: 18px; height: 18px; border: 1px solid #797775; border-radius: 3px; background: #f8f7f7; }
.row.child { padding-left: 59px; letter-spacing: -.45px; }
.row.child s:nth-child(3) { padding-right: 2px; }
.row.deep { padding-left: 81px; }
.dscroll { width: 12px; height: 438px; margin-top: 175px; background: #8a8886; }

/* Status and taskbar */
.status { height: 34px; flex: none; display: flex; justify-content: space-between; align-items: center; padding: 2px 26px 0 6px; color: #484644; border-bottom: 1px solid #000; }
.pageno { letter-spacing: -.1px; }
.zoom { display: flex; align-items: center; }
.minus { font-size: 20px; margin-right: 7px; line-height: 20px; width: 7px; }
.zplus { margin: 0 20px 0 7px; }
.pct { width: 63px; color: #605e5c; }
.taskbar { height: 8px; background: #1c1c1c; display: flex; padding: 2px 0 0 72px; }
.tsearch { width: 432px; background: #f3f2f1; height: 6px; padding-left: 329px; }
.tactive { width: 73px; margin: -2px 0 0 380px; background: #3a3a3a; }
```
